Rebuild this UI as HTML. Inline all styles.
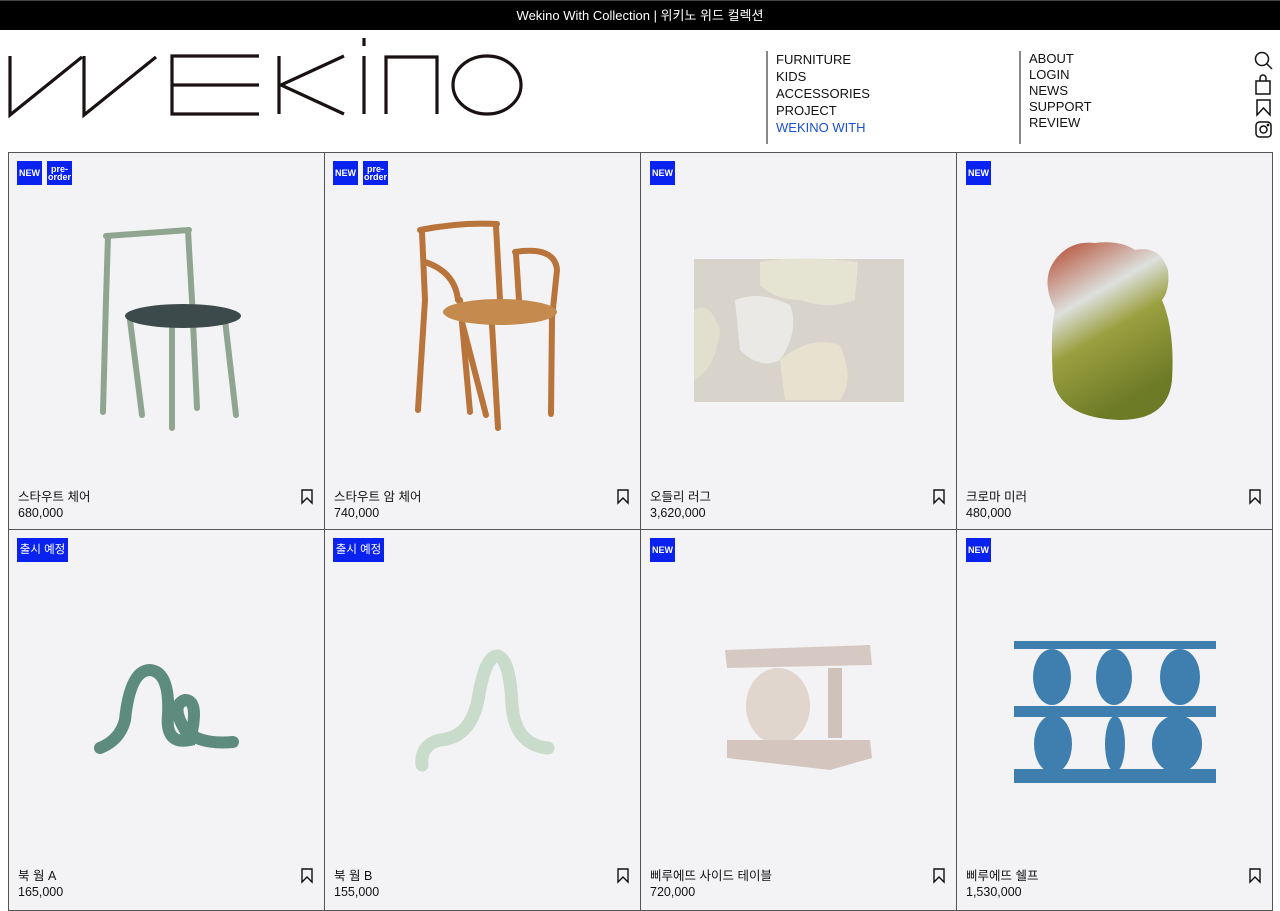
<!DOCTYPE html>
<html><head><meta charset="utf-8"><style>
*{margin:0;padding:0;box-sizing:border-box}
body{width:1280px;height:911px;overflow:hidden;background:#fff;font-family:"Liberation Sans","Noto Sans CJK KR",sans-serif;color:#111;position:relative}
.top{position:absolute;left:0;top:0;width:1280px;height:30px;background:#000;border-top:1px solid #444;color:#fff;font-size:13px;text-align:center;line-height:30px}
.nav{position:absolute;font-size:13px;line-height:17px;border-left:2px solid #888;padding-left:8px}
.nav a{display:block;color:#111;text-decoration:none}
.card{position:absolute;background:#f3f3f5;border:1px solid #555}
.b{position:absolute;top:8px;height:24px;background:#0a22f0;color:#fff;font-weight:bold;font-size:9px;display:flex;align-items:center;justify-content:center;text-align:center;line-height:8px}
.nm{position:absolute;left:9px;font-size:12.5px;line-height:16px}
</style></head><body>
<div class="top">Wekino With Collection | 위키노 위드 컬렉션</div>
<svg style="position:absolute;left:0;top:30px" width="540" height="100" fill="none" stroke="#1a1212" stroke-width="3.2">
<path d="M10 26 V85 L82 27 M84 26 V85 L156 27"/>
<path d="M259 26 H172 V84 H259 M172 55 H259"/>
<path d="M279 26 V84 M344 26 L281 55 L344 84"/>
<path d="M364 8 V16 M364 26 V84"/>
<path d="M386 84 V27 H437 V84"/>
<ellipse cx="487" cy="55" rx="34" ry="29"/>
</svg>
<div class="nav" style="left:766px;top:51px;height:93px"><a>FURNITURE</a><a>KIDS</a><a>ACCESSORIES</a><a>PROJECT</a><a style="color:#1a4fd8">WEKINO WITH</a></div>
<div class="nav" style="left:1019px;top:51px;height:93px;line-height:16px"><a>ABOUT</a><a>LOGIN</a><a>NEWS</a><a>SUPPORT</a><a>REVIEW</a></div>
<svg style="position:absolute;left:1252px;top:50px" width="24" height="92" fill="none" stroke="#111" stroke-width="1.5">
<circle cx="10" cy="9" r="6.5"/><path d="M15 14 L20 19"/>
<rect x="4" y="31" width="14" height="13"/><path d="M8 31 V28 a3 3 0 0 1 6 0 V31"/>
<path d="M5 50 H18 V65 L11.5 58 L5 65 Z"/>
<rect x="4" y="72" width="15" height="15" rx="3.5"/><circle cx="11.5" cy="79.5" r="3.5"/><circle cx="16" cy="75" r=".6" fill="#111"/>
</svg>

<div class="card" style="left:8px;top:152px;width:317px;height:378px"><div class="b" style="left:8px;width:25px">NEW</div><div class="b" style="left:38px;width:25px">pre-<br>order</div><div class="nm" style="top:336px">스타우트 체어<br>680,000</div></div>
<div class="card" style="left:324px;top:152px;width:317px;height:378px"><div class="b" style="left:8px;width:25px">NEW</div><div class="b" style="left:38px;width:25px">pre-<br>order</div><div class="nm" style="top:336px">스타우트 암 체어<br>740,000</div></div>
<div class="card" style="left:640px;top:152px;width:317px;height:378px"><div class="b" style="left:9px;width:25px">NEW</div><div class="nm" style="top:336px">오들리 러그<br>3,620,000</div></div>
<div class="card" style="left:956px;top:152px;width:317px;height:378px"><div class="b" style="left:9px;width:25px">NEW</div><div class="nm" style="top:336px">크로마 미러<br>480,000</div></div>
<div class="card" style="left:8px;top:529px;width:317px;height:382px"><div class="b" style="left:8px;width:51px;font-weight:normal;font-size:11.5px">출시 예정</div><div class="nm" style="top:338px">북 웜 A<br>165,000</div></div>
<div class="card" style="left:324px;top:529px;width:317px;height:382px"><div class="b" style="left:8px;width:51px;font-weight:normal;font-size:11.5px">출시 예정</div><div class="nm" style="top:338px">북 웜 B<br>155,000</div></div>
<div class="card" style="left:640px;top:529px;width:317px;height:382px"><div class="b" style="left:9px;width:25px">NEW</div><div class="nm" style="top:338px">삐루에뜨 사이드 테이블<br>720,000</div></div>
<div class="card" style="left:956px;top:529px;width:317px;height:382px"><div class="b" style="left:9px;width:25px">NEW</div><div class="nm" style="top:338px">삐루에뜨 쉘프<br>1,530,000</div></div>

<svg style="position:absolute;left:0;top:0" width="1280" height="911">
<defs>
<linearGradient id="mir" x1="0" y1="0" x2="0.4" y2="1"><stop offset="0" stop-color="#b2452a"/><stop offset=".38" stop-color="#dde0dd"/><stop offset=".6" stop-color="#9aa040"/><stop offset="1" stop-color="#6d7a26"/></linearGradient>
</defs>
<g fill="none" stroke="#111" stroke-width="1.4">
<path d="M302 490 H312 V503 L307 498 L302 503Z"/><path d="M618 490 H628 V503 L623 498 L618 503Z"/><path d="M934 490 H944 V503 L939 498 L934 503Z"/><path d="M1250 490 H1260 V503 L1255 498 L1250 503Z"/>
<path d="M302 869 H312 V882 L307 877 L302 882Z"/><path d="M618 869 H628 V882 L623 877 L618 882Z"/><path d="M934 869 H944 V882 L939 877 L934 882Z"/><path d="M1250 869 H1260 V882 L1255 877 L1250 882Z"/>
</g>
<g stroke="#8fa58f" stroke-width="6" fill="none" stroke-linecap="round">
<path d="M106 236 L189 230"/><path d="M108 236 L106 300 L103 412"/><path d="M188 231 L192 300 L197 408"/>
<path d="M130 320 L142 415"/><path d="M172 322 L172 428"/><path d="M225 320 L236 415"/>
</g>
<ellipse cx="183" cy="316" rx="58" ry="12" fill="#3d4a4c"/>
<g stroke="#b8743a" stroke-width="6" fill="none" stroke-linecap="round">
<path d="M420 230 Q460 222 497 224"/><path d="M422 232 L425 300 L418 410"/><path d="M496 226 L500 300"/>
<path d="M425 262 Q455 272 458 300"/><path d="M515 252 Q555 246 557 270 L552 318 L551 414"/><path d="M516 254 L519 300"/>
<path d="M462 322 L486 415"/><path d="M492 325 L498 428"/><path d="M460 300 L470 412"/>
</g>
<ellipse cx="500" cy="312" rx="57" ry="13" fill="#c48a4e"/>
<rect x="694" y="259" width="210" height="143" fill="#d8d4cb"/>
<path d="M760 262 Q800 255 858 262 L855 300 Q830 310 800 300 Q775 300 760 285Z" fill="#e5e3d2"/>
<path d="M735 300 Q760 290 790 305 Q800 330 780 360 Q760 370 740 350Z" fill="#ebe9e5"/>
<path d="M780 360 Q810 335 840 345 Q855 380 840 400 L785 400Z" fill="#e6e2cf"/>
<path d="M694 310 Q710 300 720 330 Q715 370 694 380Z" fill="#e3dfce"/>
<path d="M1095 243 Q1120 240 1135 250 Q1160 245 1168 270 Q1170 290 1162 300 Q1175 330 1172 380 Q1168 420 1120 420 Q1060 418 1053 380 Q1050 330 1055 310 Q1040 280 1055 260 Q1070 240 1095 243Z" fill="url(#mir)"/>
<path d="M100 748 Q120 740 125 720 Q130 670 150 670 Q170 672 168 715 Q165 745 190 740 Q200 700 185 700 Q170 705 185 730 Q200 745 233 742" fill="none" stroke="#5d8c7f" stroke-width="12" stroke-linecap="round"/>
<path d="M422 765 Q420 745 440 740 Q470 738 478 700 Q485 655 498 656 Q510 660 512 705 Q515 745 548 748" fill="none" stroke="#c9dccb" stroke-width="13" stroke-linecap="round"/>
<path d="M725 650 L870 645 L872 665 L727 668Z" fill="#d6c9c3"/>
<ellipse cx="778" cy="706" rx="32" ry="38" fill="#e1d6ce"/>
<rect x="828" y="668" width="14" height="70" fill="#cfc2bb"/>
<path d="M727 740 L870 740 L872 758 L830 770 L727 758Z" fill="#d4c6bf"/>
<g fill="#3e7fb0">
<rect x="1014" y="641" width="202" height="8"/><rect x="1014" y="706" width="202" height="11"/><rect x="1014" y="769" width="202" height="14"/>
<ellipse cx="1052" cy="677" rx="19" ry="28"/><ellipse cx="1114" cy="677" rx="18" ry="28"/><ellipse cx="1180" cy="677" rx="20" ry="28"/>
<ellipse cx="1053" cy="744" rx="19" ry="29"/><ellipse cx="1115" cy="744" rx="10" ry="28"/><ellipse cx="1177" cy="744" rx="25" ry="29"/>
</g>
</svg>
</body></html>
